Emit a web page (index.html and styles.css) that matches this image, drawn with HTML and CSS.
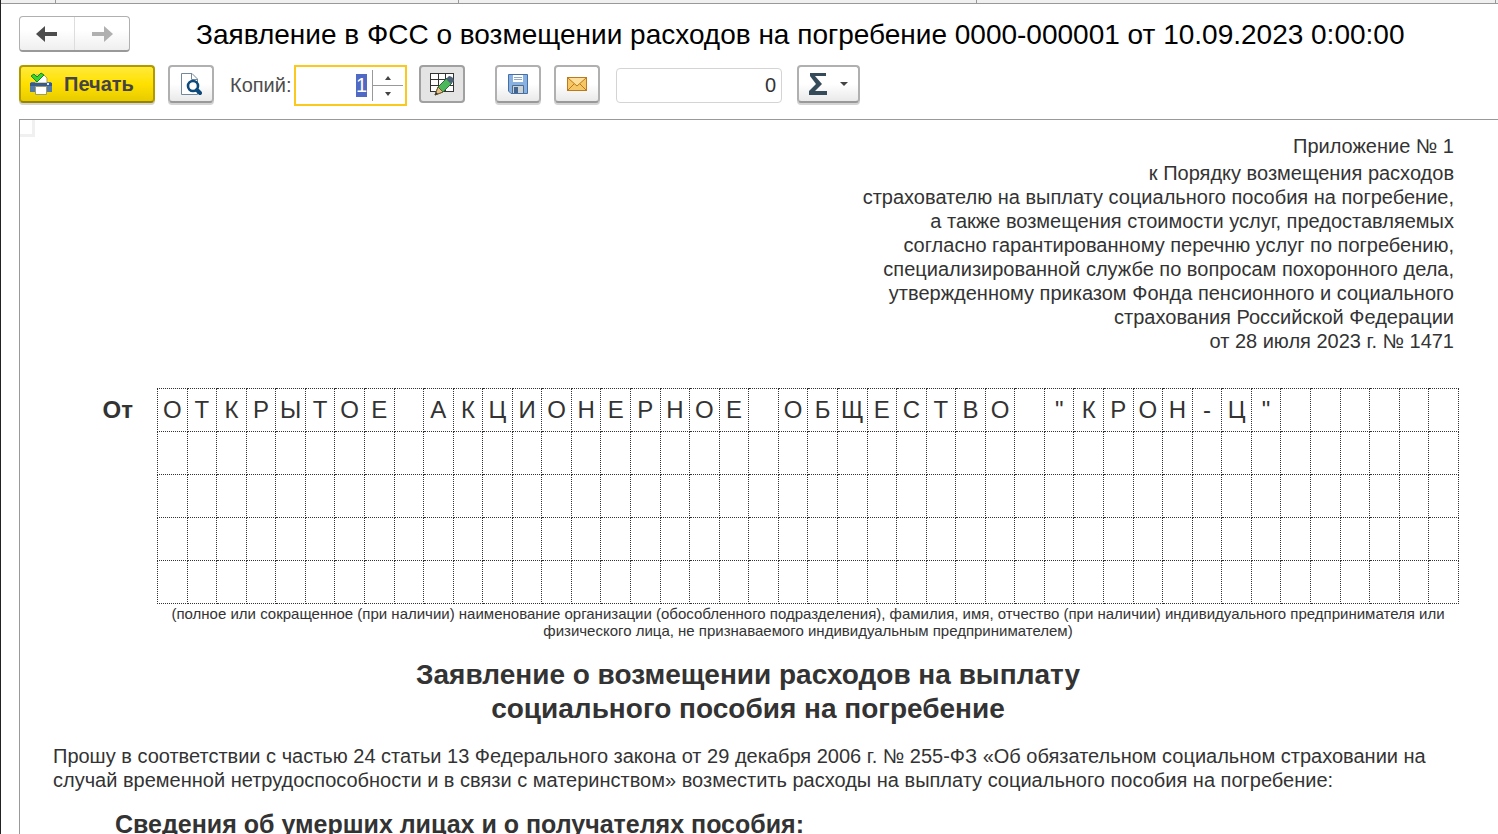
FILE: index.html
```html
<!DOCTYPE html>
<html lang="ru">
<head>
    <meta charset="UTF-8">
    <meta name="viewport" content="width=device-width, initial-scale=1.0">
    <title>Заявление в ФСС о возмещении расходов на погребение</title>
    <link rel="stylesheet" href="styles.css">
</head>
<body>
    <div class="window">
        <div class="tabs">
            <div class="tab tab-home"></div>
            <div class="tab tab-first"></div>
            <div class="tab tab-second"></div>
            <div class="tab tab-third"></div>
        </div>
        <header class="title-bar">
            <div class="nav-buttons">
                <button type="button" class="nav-button" aria-label="Назад">
                    <svg width="22" height="16" viewBox="0 0 22 16"><path d="M0 8 L9 0 V6 H21 V10 H9 V16 Z" fill="#4d4d4d"/></svg>
                </button>
                <button type="button" class="nav-button" aria-label="Вперед">
                    <svg width="22" height="16" viewBox="0 0 22 16"><path d="M22 8 L13 0 V6 H1 V10 H13 V16 Z" fill="#b0b0b0"/></svg>
                </button>
            </div>
            <h1>Заявление в ФСС о возмещении расходов на погребение 0000-000001 от 10.09.2023 0:00:00</h1>
        </header>
        <div class="toolbar">
            <button type="button" class="tool print-button">
                <svg width="22" height="24" viewBox="0 0 22 24">
                    <path d="M6 3 H14 L17 6 V11 H6 Z" fill="#fff" stroke="#b5a14a"/>
                    <path d="M1 10 H5 V12 H17 V10 H21 L22 12 V20 H0 V12 Z" fill="#547aa8"/>
                    <path d="M0 11 H22 V14 H0 Z" fill="#365a89"/>
                    <rect x="17" y="11" width="2" height="2" fill="#dce9f7"/>
                    <path d="M5.500 14.500 H16.500 V22.500 H5.500 Z" fill="#fff" stroke="#9c9a70"/>
                    <path d="M1 4 L4 2 L7 5 L11 1 L14 3 L7 10 Z" fill="#3dd12b" stroke="#128a12"/>
                </svg>
                Печать
            </button>
            <button type="button" class="tool preview-button" aria-label="Предварительный просмотр">
                <svg width="22" height="24" viewBox="0 0 22 24">
                    <path d="M1.500 1.500 H12 L17.500 7 V22.500 H1.500 Z" fill="#fff" stroke="#72889d"/>
                    <path d="M11.500 1.500 V7.500 H17" fill="none" stroke="#72889d"/>
                    <circle cx="13" cy="14" r="5" fill="#fff" stroke="#0b4a7c" stroke-width="2.6"/>
                    <path d="M17 18 L20 21" stroke="#0b4a7c" stroke-width="4" stroke-linecap="round"/>
                </svg>
            </button>
            <label for="copies">Копий:</label>
            <div class="counter">
                <input type="text" id="copies" value="1">
                <div class="spinner">
                    <button type="button" aria-label="Больше"><svg width="6" height="4" viewBox="0 0 6 4"><path d="M0 4 L3 0 L6 4 Z" fill="#444"/></svg></button>
                    <button type="button" aria-label="Меньше"><svg width="6" height="4" viewBox="0 0 6 4"><path d="M0 0 L3 4 L6 0 Z" fill="#444"/></svg></button>
                </div>
            </div>
            <button type="button" class="tool edit-button" aria-label="Редактирование">
                <svg width="24" height="24" viewBox="0 0 24 24">
                    <rect x="1" y="1" width="22" height="18" fill="#fff"/>
                    <path d="M0 1.500 H24 M0 7.500 H24 M0 13.500 H24 M0 19.500 H24 M0.500 1 V20 M8.500 1 V20 M15.500 1 V20 M23.500 1 V20" stroke="#333"/>
                    <path d="M5 23 L8 15 L17 6 L22 11 L13 20 Z" fill="#4cb85c" stroke="#2c6d38"/>
                    <path d="M8 15 L13 20 L5 23 Z" fill="#e8c08a" stroke="#76552c"/>
                    <path d="M5 23 L6 20 L8 22 Z" fill="#333"/>
                    <path d="M16 7 L19 4 Q21 4 23 6 L24 9 L21 12 Z" fill="#4d6478"/>
                </svg>
            </button>
            <button type="button" class="tool save-button" aria-label="Сохранить">
                <svg width="20" height="20" viewBox="0 0 20 20">
                    <path d="M0.500 0.500 H19.500 V19.500 H3 L0.500 17 Z" fill="#88b0e0" stroke="#4470a6"/>
                    <rect x="5" y="1" width="10" height="7" fill="#fff"/>
                    <path d="M6 3.500 H14 M6 5.500 H14" stroke="#8fa9c6"/>
                    <path d="M4.500 19 V11.500 H15.500 V19" fill="#cbd2d6" stroke="#4d6c8e"/>
                    <rect x="6" y="13" width="4" height="6" fill="#41658f"/>
                </svg>
            </button>
            <button type="button" class="tool mail-button" aria-label="Отправить по почте">
                <svg width="20" height="14" viewBox="0 0 20 14">
                    <rect x="0.500" y="0.500" width="19" height="13" fill="#f5c765" stroke="#bd7a1c"/>
                    <path d="M1 1 L10 9 L19 1" fill="#fbdf9a" stroke="#bd7a1c"/>
                    <path d="M1 13 L7 7 M19 13 L13 7" stroke="#bd7a1c"/>
                </svg>
            </button>
            <input type="text" class="sum-field" value="0" aria-label="Сумма" readonly>
            <button type="button" class="tool sigma-button" aria-label="Сумма ячеек">
                <svg width="18" height="22" viewBox="0 0 18 22"><path d="M1 0 H17 V3 H6 L13 11 L6 18 H18 V22 H0 V18 L7 11 L1 3 Z" fill="#364b5a"/></svg>
                <svg width="8" height="4" viewBox="0 0 8 4"><path d="M0 0 H8 L4 4 Z" fill="#444"/></svg>
            </button>
        </div>
        <main class="sheet">
            <div class="corner"></div>
            <div class="appendix">
                <p>Приложение № 1</p>
                <p>к Порядку возмещения расходов<br>
                страхователю на выплату социального пособия на погребение,<br>
                а также возмещения стоимости услуг, предоставляемых<br>
                согласно гарантированному перечню услуг по погребению,<br>
                специализированной службе по вопросам похоронного дела,<br>
                утвержденному приказом Фонда пенсионного и социального<br>
                страхования Российской Федерации<br>
                от 28 июля 2023 г. № 1471</p>
            </div>
            <div class="sender">
                <div class="sender-label">От</div>
                <div class="sender-name">
                    <table id="letters"></table>
                    <p class="hint">(полное или сокращенное (при наличии) наименование организации (обособленного подразделения), фамилия, имя, отчество (при наличии) индивидуального предпринимателя или<br>
                    физического лица, не признаваемого индивидуальным предпринимателем)</p>
                </div>
            </div>
            <h2>Заявление о возмещении расходов на выплату<br>социального пособия на погребение</h2>
            <p class="request">Прошу в соответствии с частью 24 статьи 13 Федерального закона от 29 декабря 2006 г. № 255-ФЗ «Об обязательном социальном страховании на<br>
            случай временной нетрудоспособности и в связи с материнством» возместить расходы на выплату социального пособия на погребение:</p>
            <h3>Сведения об умерших лицах и о получателях пособия:</h3>
        </main>
    </div>

    <script>
        // one letter per cell, 5 rows of 44 cells
        var organization = 'ОТКРЫТОЕ АКЦИОНЕРНОЕ ОБЩЕСТВО "КРОН-Ц"';
        var table = document.getElementById('letters');

        for (var i = 0; i < 5; i++) {
            var row = table.insertRow();
            for (var j = 0; j < 44; j++) {
                row.insertCell().textContent = organization.charAt(i * 44 + j);
            }
        }

        document.getElementById('copies').select();
    </script>
</body>
</html>
```
FILE: styles.css
```css
* {
    box-sizing: border-box;
}
body {
    margin: 0;
    font-family: "Liberation Sans", Arial, sans-serif;
    font-size: 20px;
    color: #333;
    background-color: #fff;
}
h1, h2, h3, p {
    margin: 0;
}
button, input {
    font-family: inherit;
    font-size: 20px;
    color: inherit;
}
.window {
    display: flex;
    flex-direction: column;
    height: 100vh;
    overflow: hidden;
    border-left: 1px solid #222;
}
.tabs {
    display: flex;
    flex: none;
    height: 4px;
    padding-right: 2px;
    background-color: #f0f0f0;
    border-bottom: 1px solid #999;
}
.tab {
    border-right: 1px solid #999;
}
.tab-home {
    width: 55px;
}
.tab-first {
    width: 403px;
}
.tab-second {
    width: 518px;
}
.tab-third {
    flex: 1;
}
.title-bar {
    display: flex;
    flex: none;
    align-items: center;
    gap: 66px;
    padding: 12px 18px 0;
}
.title-bar h1 {
    padding-top: 2px;
    font-size: 28px;
    font-weight: normal;
    line-height: 32px;
    color: #000;
    white-space: nowrap;
}
.nav-buttons {
    display: flex;
    flex: none;
    width: 111px;
    height: 36px;
    border: 1px solid #b0b0b0;
    border-bottom: 2px solid #999;
    border-radius: 4px;
    background: linear-gradient(#fff 40%, #efefef);
}
.nav-button {
    display: flex;
    flex: 1;
    align-items: center;
    justify-content: center;
    padding: 0;
    border: none;
    background: none;
}
.nav-button + .nav-button {
    border-left: 1px solid #ddd;
}
.toolbar {
    display: flex;
    flex: none;
    align-items: center;
    height: 41px;
    margin: 13px 18px;
}
.tool {
    display: flex;
    flex: none;
    align-items: center;
    align-self: flex-start;
    justify-content: center;
    width: 46px;
    height: 38px;
    padding: 0;
    border: 2px solid #b0b0b0;
    border-bottom-color: #999;
    border-radius: 4px;
    background: linear-gradient(#fff 50%, #e9e9e9);
    box-shadow: 0 2px 0 #d4d4d4;
}
.print-button {
    gap: 12px;
    width: 136px;
    padding-right: 10px;
    font-weight: bold;
    color: #444;
    border-color: #b09a00;
    border-bottom-color: #968300;
    background: linear-gradient(#ffea3a, #ffe000 50%, #e8cb00);
}
.preview-button {
    margin: 0 16px 0 13px;
}
.toolbar label {
    width: 64px;
    color: #4d4d4d;
}
.counter {
    display: flex;
    width: 113px;
    height: 41px;
    padding: 3px 2px;
    border: 2px solid #fbc91d;
    background-color: #fff;
}
.counter input {
    flex: 1;
    min-width: 0;
    padding: 0 5px;
    border: none;
    outline: none;
    text-align: right;
}
.counter input::selection {
    color: #fff;
    background-color: #5069c4;
}
.spinner {
    display: flex;
    flex-direction: column;
    width: 31px;
    border-left: 1px solid #999;
}
.spinner button {
    display: flex;
    flex: 1;
    align-items: center;
    justify-content: center;
    padding: 0;
    border: none;
    background: none;
}
.spinner button + button {
    border-top: 1px solid #999;
}
.edit-button {
    margin: 0 30px 0 12px;
    border-color: #a0a0a0;
    background: #e4e4e4;
    box-shadow: none;
}
.mail-button {
    margin: 0 16px 0 13px;
}
.sum-field {
    width: 166px;
    height: 35px;
    padding: 0 5px;
    border: 1px solid #d4d4d4;
    border-radius: 4px;
    text-align: right;
}
.sigma-button {
    gap: 13px;
    width: 63px;
    margin-left: 15px;
}
.sheet {
    position: relative;
    flex: 1;
    min-height: 0;
    margin-left: 18px;
    padding: 14px 39px 0 33px;
    overflow: hidden;
    border-top: 1px solid #999;
    border-left: 1px solid #999;
    line-height: 24px;
    white-space: nowrap;
}
.corner {
    position: absolute;
    top: 0;
    left: 0;
    width: 15px;
    height: 17px;
    border-right: 3px solid #f0f0f0;
    border-bottom: 3px solid #f0f0f0;
}
.appendix {
    padding-right: 5px;
    text-align: right;
}
.appendix p + p {
    margin-top: 3px;
}
.sender {
    display: flex;
    margin-top: 35px;
}
.sender-label {
    width: 104px;
    padding-right: 24px;
    font-size: 24px;
    font-weight: bold;
    line-height: 44px;
    text-align: right;
}
.sender-name {
    flex: 1;
    min-width: 0;
}
#letters {
    width: 100%;
    table-layout: fixed;
    border-collapse: collapse;
}
#letters td {
    height: 43px;
    padding: 0;
    border: 1px dotted #333;
    font-size: 24px;
    text-align: center;
}
.hint {
    margin-top: 1px;
    font-size: 15px;
    line-height: 17px;
    text-align: center;
}
h2 {
    margin-top: 19px;
    padding-right: 16px;
    font-size: 28px;
    line-height: 34px;
    text-align: center;
}
.request {
    margin-top: 18px;
}
h3 {
    margin-top: 18px;
    padding-left: 62px;
    font-size: 25px;
    line-height: 28px;
}
```
